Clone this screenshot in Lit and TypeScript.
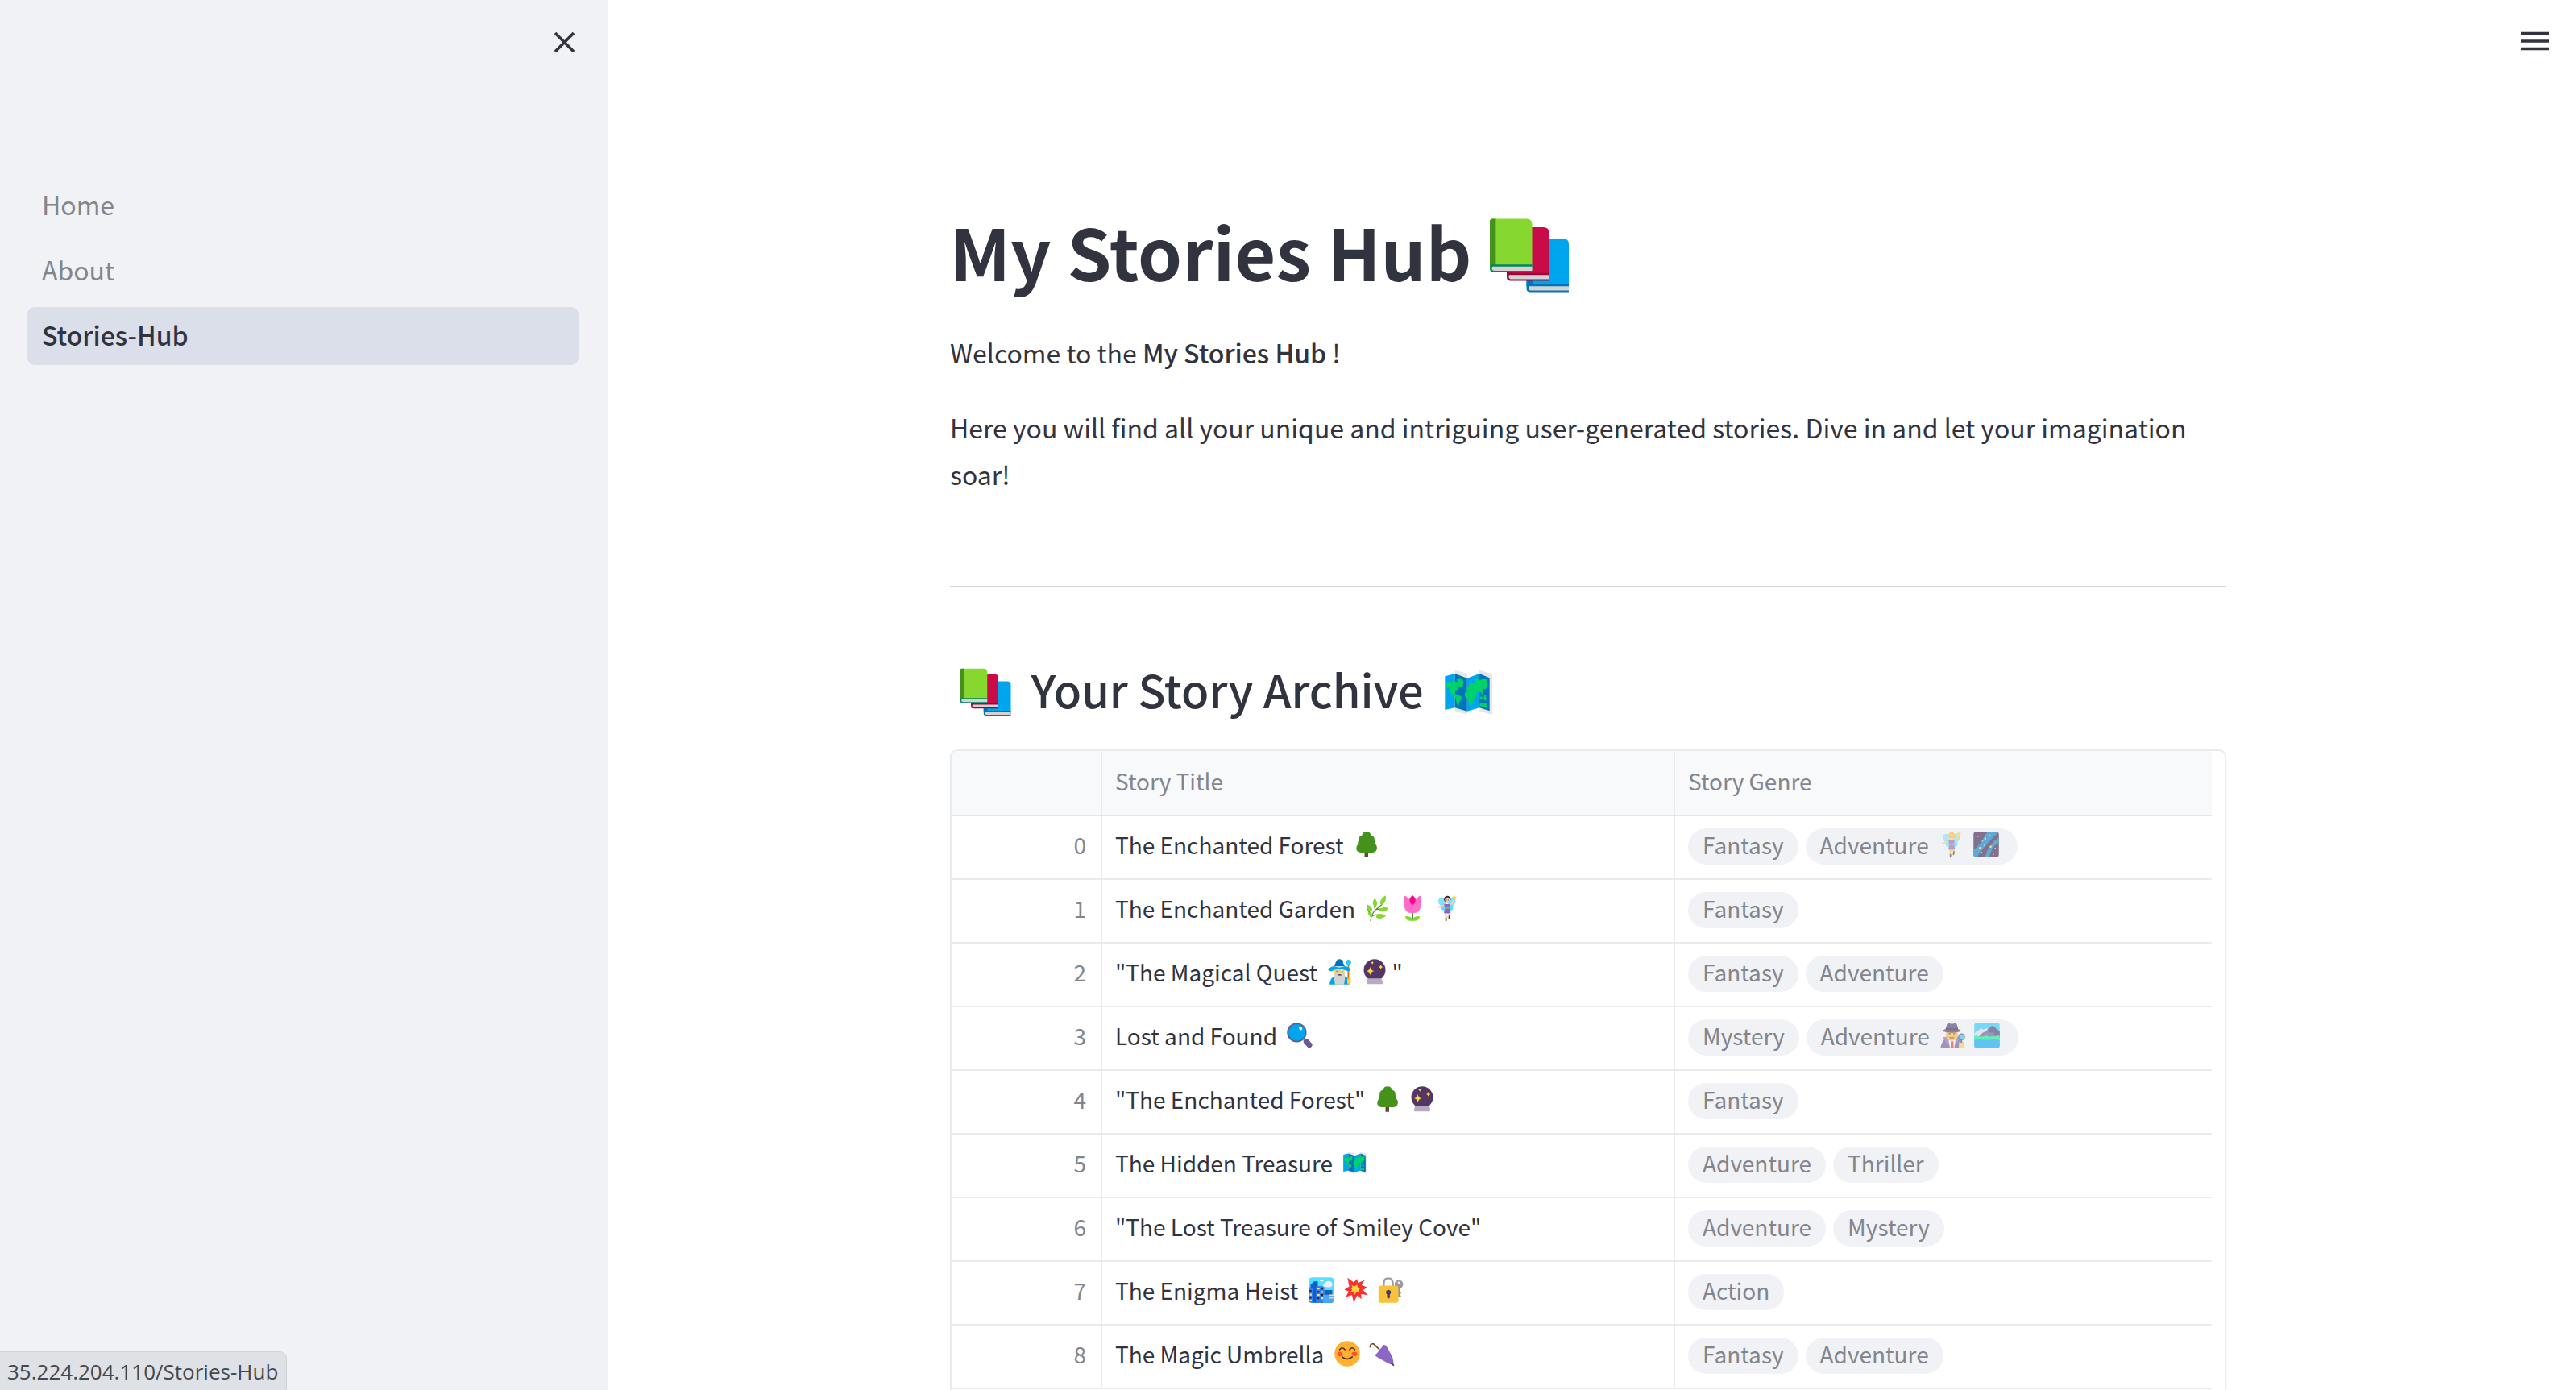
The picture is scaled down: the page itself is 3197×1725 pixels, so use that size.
import { LitElement, html, svg, css, nothing, type TemplateResult } from "lit";
import { customElement, property, state } from "lit/decorators.js";

type Icon =
  | "books" | "map" | "tree" | "herb" | "tulip" | "fairy" | "fairyGold" | "wizard" | "crystal"
  | "magnifier" | "city" | "burst" | "lock" | "smile" | "umbrella" | "galaxy" | "detective" | "lake";

interface Label {
  text: string;
  icons?: Icon[];
  tail?: string;
}

interface Story {
  title: Label;
  genres: Label[];
}

const STORIES: Story[] = [
  { title: { text: "The Enchanted Forest", icons: ["tree"] }, genres: [{ text: "Fantasy" }, { text: "Adventure", icons: ["fairyGold", "galaxy"] }] },
  { title: { text: "The Enchanted Garden", icons: ["herb", "tulip", "fairy"] }, genres: [{ text: "Fantasy" }] },
  { title: { text: '"The Magical Quest', icons: ["wizard", "crystal"], tail: '"' }, genres: [{ text: "Fantasy" }, { text: "Adventure" }] },
  { title: { text: "Lost and Found", icons: ["magnifier"] }, genres: [{ text: "Mystery" }, { text: "Adventure", icons: ["detective", "lake"] }] },
  { title: { text: '"The Enchanted Forest"', icons: ["tree", "crystal"] }, genres: [{ text: "Fantasy" }] },
  { title: { text: "The Hidden Treasure", icons: ["map"] }, genres: [{ text: "Adventure" }, { text: "Thriller" }] },
  { title: { text: '"The Lost Treasure of Smiley Cove"' }, genres: [{ text: "Adventure" }, { text: "Mystery" }] },
  { title: { text: "The Enigma Heist", icons: ["city", "burst", "lock"] }, genres: [{ text: "Action" }] },
  { title: { text: "The Magic Umbrella", icons: ["smile", "umbrella"] }, genres: [{ text: "Fantasy" }, { text: "Adventure" }] },
];

const book = (x: number, y: number, cover: string, spine: string, base: string) => svg`
  <g transform="translate(${x} ${y})">
    <path fill=${cover} d="M0 1Q0 0 1 0H13Q15 0 15 2V17H0Z"/>
    <path fill=${spine} d="M0 1Q0 0 1 0H2.1V17H0Z"/>
    <path fill=${base} d="M1.2 16.2H15V19H1.2Q0 19 0 17.6Q0 16.2 1.2 16.2Z"/>
    <path fill="#d3d3d3" d="M1.5 16.9H15V18.4H1.5Q.7 18.4.7 17.6T1.5 16.9Z"/>
  </g>`;

const fairy = (skin: string, hair: string) => svg`
  <ellipse cx="10.500" cy="9" rx="4.200" ry="5" fill="#83e1ff" transform="rotate(-25 10.500 9)"/>
  <ellipse cx="21" cy="9" rx="4" ry="5" fill="#83e1ff" transform="rotate(20 21 9)"/>
  <ellipse cx="12.500" cy="15" rx="2.800" ry="3.500" fill="#50e2ff"/>
  <ellipse cx="20" cy="15" rx="2.600" ry="3.500" fill="#50e2ff"/>
  <path d="M12.500 12.500Q10 15 6.500 14.700" fill="none" stroke=${skin} stroke-width="1.800" stroke-linecap="round"/>
  <path d="M19 12.300Q23 11.500 23.500 5.500" fill="none" stroke=${skin} stroke-width="1.700" stroke-linecap="round"/>
  <path d="M14.500 20L14.800 28M18 20L18.600 24L16.500 26.500" fill="none" stroke=${skin} stroke-width="2"/>
  <path d="M14.800 27.200V29.800M18.700 23.800L18.200 27" stroke="#533566" stroke-width="1.500" stroke-linecap="round"/>
  <circle cx="16.200" cy="6.200" r="3.700" fill=${hair}/>
  <ellipse cx="16.200" cy="7.200" rx="2.500" ry="3" fill=${skin}/>
  <path d="M15.200 7H15.300M17.200 7H17.300" stroke="#402a32" stroke-width=".8" stroke-linecap="round"/>
  <path d="M12.600 11.500H19.400L18.700 16L20 21Q16 22.500 12.400 21L13.700 16Z" fill="#8d65c5"/>
  <path d="M13.300 15H19V16.500H13.300Z" fill="#b4ac4c"/>
  <path d="M24 1.500L24.900 3.300L26.900 3.600L25.400 5L25.800 7L24 6L22.200 7L22.600 5L21.100 3.600L23.100 3.300Z" fill="#fcd53f"/>`;

const ART: Record<Icon, TemplateResult> = {
  books: svg`${book(15, 10, "#00a6ed", "#0074ba", "#0074ba")}${book(8, 6, "#ca0b4a", "#990838", "#990838")}${book(2, 3, "#86d72f", "#44911b", "#008463")}`,
  map: svg`
    <path fill="#e6e6e6" d="M8.300 3.900L15 5.700V28.400L8.300 26.400ZM21.800 3.900L28.900 5.900V28.400L21.800 26.400Z"/>
    <path fill="#00a6ed" d="M2.800 7.200L8.300 5.800V24.600L2.800 25.800ZM15 8.300L21.800 5.800V24.600L15 26.500Z"/>
    <path fill="#0074ba" d="M8.300 5.800L15 8.300V26.500L8.300 24.600ZM21.800 5.800L27.400 8.100V26.300L21.800 24.600Z"/>
    <path fill="#00d26a" d="M3.600 12Q4 10.300 5.500 10.300L8 9.800L10 10.500L9.300 9Q12.800 8 13 10.500T11 13L9.500 12.500L10 14.500L8 15.500L8.300 17L10 17.500Q12.300 18 12 19.500L10.500 22L10.300 24L9.300 22.500L8.800 19.500L7.500 18L6 16.500L5.300 14L4.700 13.500L4 14.300Z"/>
    <path fill="#00d26a" d="M14.500 13.500L16 12.500L16.500 11L19 10.500L20 8.500L22 9.500L23.500 8.800L26 9L26.300 12L25 14.500L23.800 14L23.500 17.500L22.500 16L20.500 15.500L20 18L18.500 20L18 22.500L16.300 23L15.600 19.500L13.800 18.500L13.700 16.500L16 15.200L15 14.700Z"/>
    <path fill="#00d26a" d="M22 18.500H23.600V20H22ZM24.300 17.500H25.500V20.500H24.300ZM22 22L25.800 21.800V24.200L22 23.700Z"/>`,
  tree: svg`
    <path fill="#6d4534" d="M13.800 23H17.800V30H13.800Z"/>
    <path fill="#44911b" d="M16 2Q20.200 2 21 5.800Q25.300 7 24.700 11.600Q26.300 13 25.800 15.500Q27.700 17.500 27.500 20Q27 24.700 22.500 24.800H9.500Q5 24.600 4.700 20.500Q4.600 17.500 6.500 15.700Q5.700 13.300 7.300 11.700Q6.700 7.200 11 5.800Q12 2 16 2Z"/>`,
  herb: svg`
    <path d="M8 30Q8.500 22 14.500 17Q17 15 20.500 12M8.200 25.500Q13 22.500 18 23.500M14 17.500Q18.500 17 24 16.500M8.500 23Q5 19 4 14.500M13 18Q12 14 12 9" fill="none" stroke="#44911b" stroke-width="1.100" stroke-linecap="round"/>
    <path fill="#86d72f" d="M24.500 2Q25.800 7 23 10.500Q20.500 13 19 11.800Q17.800 9 20 6Q21.800 3.500 24.500 2ZM12.500 5Q15.500 8 15.200 11.500Q14.500 14.500 13 14.800Q10.500 13.500 10.500 10Q10.800 6.500 12.500 5ZM4.300 12Q8.800 13.500 9.800 17Q10 19.500 8.700 20Q5.500 19.500 4.500 16.500ZM5 20.500Q8.800 20.500 10 23Q10 25.500 8 25.500Q5.500 24.500 5 20.500ZM27.800 16Q25.500 19.500 21.500 20Q18 20 17.500 18.500Q18.800 15.800 22 15.200Q25.500 14.800 27.800 16ZM25 24.500Q21.500 28 17.500 27.500Q14 26.800 14 25Q15.500 22.500 19 22.300Q22.500 22.500 25 24.500Z"/>`,
  tulip: svg`
    <path fill="#44911b" d="M15.300 20H16.900V30H15.300Z"/>
    <path fill="#86d72f" d="M16 29.800Q9 30.800 8 25Q14 24.300 16 28.500Q18 24.300 24.200 25Q23 30.800 16 29.800Z"/>
    <path fill="#ff6dc6" d="M7 3.500Q7.200 2 8.500 2.500L12 6L16 2.500L20 6L23.500 2.500Q24.900 2 25 3.500V13Q24.800 21.500 16 21.500Q7.200 21.500 7 13Z"/>
    <path fill="#ff0090" d="M16 1.800Q19.300 4.500 19.200 8Q18.500 11.500 16 12.800Q13.500 11.500 12.800 8Q12.900 4.500 16 1.800Z"/>`,
  fairy: fairy("#f3c9b5", "#402a32"),
  fairyGold: fairy("#ffc83d", "#ffb02e"),
  wizard: svg`
    <path d="M25.300 7V29" stroke="#d67d00" stroke-width="1.800" stroke-linecap="round"/>
    <circle cx="25.500" cy="5.500" r="2.800" fill="#26c9fc"/>
    <path fill="#00a6ed" d="M4.500 30Q5 22.500 10 21H22Q26 22.500 26.500 30Z"/>
    <path fill="#ffc83d" d="M24 23.500H28V28Q28 30 26 30T24 28ZM10 12H21V19H10Z"/>
    <path fill="#d3d3d3" d="M9.800 17Q12 16 15.500 16.300Q19 16 21.300 17Q22 24 20.500 30H10.500Q9 24 9.800 17Z"/>
    <path fill="#fff" d="M11.500 14H14.500V15.200H11.500ZM16.800 14H19.800V15.200H16.800Z"/>
    <path d="M12.500 15V15.200M18.500 15V15.200M14.300 19.500H17" stroke="#402a32" stroke-width="1.200" stroke-linecap="round"/>
    <path fill="#0074ba" d="M9.500 10L12 4Q13.500 1.500 16 2L20.800 4Q19 4.500 19.300 6L21.500 10Z"/>
    <path fill="#00a6ed" d="M3 13.800Q3.500 11 9.300 9.700Q15.500 12.300 21.700 9.700Q27 11 27.800 13.800Q26 16.500 22 14.500Q15.500 10.500 9 14.500Q5 16.500 3 13.800Z"/>`,
  crystal: svg`
    <circle cx="16" cy="14" r="12" fill="#533566"/>
    <path fill="#b4acbc" d="M8.500 23.300H23.500Q25.500 27 24.800 29.500H7.200Q6.500 27 8.500 23.300Z"/>
    <path fill="#fcd53f" d="M11.200 10.500Q11.700 14.500 15.500 15.200Q11.700 16 11.200 20Q10.700 16 7 15.200Q10.700 14.500 11.200 10.500ZM22.800 8Q23.200 10.300 25.200 10.600Q23.200 11 22.800 13.200Q22.400 11 20.500 10.600Q22.400 10.300 22.800 8ZM13.500 4.200Q13.800 5.700 15.200 6Q13.800 6.300 13.500 7.800Q13.200 6.300 11.800 6Q13.200 5.700 13.500 4.200Z"/>`,
  magnifier: svg`
    <path d="M20.500 20.500L22.500 22.500" stroke="#9b9b9b" stroke-width="2.500"/>
    <path d="M23.300 22.800L26.800 26.500" stroke="#635994" stroke-width="6" stroke-linecap="round"/>
    <circle cx="12.800" cy="12.800" r="10" fill="#00a6ed" stroke="#635994" stroke-width="1.600"/>
    <ellipse cx="17" cy="8.200" rx="1.600" ry="2.100" fill="#fff" transform="rotate(-35 17 8.200)"/>`,
  city: svg`
    <rect x="2" y="2" width="28" height="28" rx="4" fill="#50e2ff"/>
    <path fill="#0f5fc4" d="M4 10L8 6.500H12V12H18V30H6Q2 30 2 26V13H4ZM19 16H28V30H19Z"/>
    <path fill="#2e7ff0" d="M2 14H7V30H6Q2 30 2 26ZM10 12H19V30H10Z"/>
    <path fill="#4aa5ff" d="M18 21H30V26Q30 30 26 30H18Z"/>
    <path fill="#f3eef8" d="M18.500 12.500Q16.500 9.500 20 9Q20.500 5.800 24 6Q28 6.300 28 10Q27.500 13 24.500 12.800ZM14 5.800Q15.500 4.500 17.500 4.700Q19 5 18 6.500H14.500Z"/>
    <path fill="#ffe06b" d="M11.500 13.300H14V15.300H11.500ZM15.800 17H18V19H15.800ZM11.500 20.500H14V22.500H11.500ZM15.800 24H18V26H15.800ZM3 20H5.300V22H3ZM24 20.800H30V22.300H24ZM24 23.800H30V25.300H24ZM3 26.500H5.300V28H3Z"/>
    <path fill="#321b41" d="M15.800 13.300H17.800V15.300H15.800ZM11.500 17H13.500V19H11.500ZM15.800 20.500H17.800V22.500H15.800ZM11.500 24H13.500V26H11.500ZM3 16H5V18H3ZM3 23.300H5V25.300H3Z"/>`,
  burst: svg`
    <path fill="#f8312f" d="M6.500 2.500L13.500 7.500L17 3.500L18 8L25.500 5L22 10.500L28.500 13L23.500 16L29 21.500L21.500 20.500L22 26L17 22L13.500 30L11.500 21.500L4.500 23.500L8 17.500L3 15.500L8.500 12Z"/>
    <path fill="#fcd53f" d="M11 10.500L14.300 12L17 10L17.800 13L21 13.500L18.800 15.800L20 18.500L16.800 17.700L14.500 21L13.200 17.500L10 18L11.800 15.500L9.500 13.500L12 13Z"/>`,
  lock: svg`
    <path d="M24.500 11V24" stroke="#8a8a8a" stroke-width="2.400"/>
    <path fill="#8a8a8a" d="M24 18H27.300V20H24ZM24 22H27.300V24H24Z"/>
    <circle cx="25" cy="9.500" r="4.700" fill="#9b9b9b"/><circle cx="25" cy="7.800" r="1.200" fill="#f3f3f3"/>
    <path d="M8.300 13V8.500Q8.500 3 13.300 3T18.300 8.500V13" fill="none" stroke="#9b9b9b" stroke-width="2.200"/>
    <rect x="2.500" y="11" width="22" height="19" rx="3" fill="#f9c23c"/>
    <path fill="#433b6b" d="M13.500 15.800Q16.200 16 16.200 18.600Q16.100 20 15 20.900V24Q15 25.300 13.500 25.300T12 24V20.900Q10.900 20 10.800 18.600Q10.900 16 13.500 15.800Z"/>`,
  smile: svg`
    <circle cx="16" cy="16" r="14" fill="#ffb02e"/>
    <ellipse cx="8" cy="16.200" rx="3" ry="2.500" fill="#ff5032"/><ellipse cx="24" cy="16.200" rx="3" ry="2.500" fill="#ff5032"/>
    <path d="M7.500 11.500Q10.500 7.500 13.500 11.500M18.500 11.500Q21.500 7.500 24.500 11.500M10.300 19.500Q16 24 21.700 19.500" fill="none" stroke="#402a32" stroke-width="1.300" stroke-linecap="round"/>`,
  umbrella: svg`
    <path d="M3 8.500Q3.200 4.500 6.800 5.200L13 11" fill="none" stroke="#7d4533" stroke-width="1.500" stroke-linecap="round"/>
    <path fill="#8d65c5" d="M17.500 6.200Q20 5.800 21 7.500L27.500 19Q29 24 29 28L24 27L12 20.500L8 17.800Q11.500 15 13.500 11.500Q16.500 8.500 17.500 6.200Z"/>
    <path d="M26.500 27L29 28.800" stroke="#402a52" stroke-width="1.200" stroke-linecap="round"/>`,
  galaxy: svg`
    <rect x="2" y="2" width="28" height="28" rx="3" fill="#3d1a46"/>
    <path fill="#0079c0" d="M2 22Q10 16 14 7Q16 3.500 17.500 2H27Q28 2 29 3Q16 15 5.500 30Q2 30 2 26ZM30 8V14Q22 18 19.500 30H14.500Q18 16 30 8Z"/>
    <g fill="#5fd0ff"><circle cx="7" cy="7" r=".7"/><circle cx="12" cy="12" r=".8"/><circle cx="20" cy="6" r=".8"/><circle cx="11" cy="25" r=".9"/><circle cx="26" cy="20" r=".7"/><circle cx="14" cy="17" r=".8"/><circle cx="24" cy="27" r=".7"/></g>
    <circle cx="9.500" cy="20" r="1.300" fill="#fcd53f"/><circle cx="15" cy="9.500" r="1.100" fill="#fcd53f"/><circle cx="21" cy="18.500" r="1.100" fill="#fcd53f"/>`,
  detective: svg`
    <path fill="#635994" d="M3 30Q4 22 10 18L16 21L22 18Q26 21 27 30Z"/>
    <path fill="#8d65c5" d="M5.500 18L11 17L15 29H13ZM22 17L24.500 19L17.500 29H16.500Z"/>
    <path fill="#fff" d="M11.500 18.500L15.300 22L20 18.500L18 30H13.500Z"/>
    <path fill="#f8312f" d="M14.300 22.500H17.200L17.500 30H14Z"/>
    <path fill="#ffb02e" d="M9 11H22V17Q21 21.500 15.500 22Q10 21.500 9 17Z"/>
    <path d="M12.500 14H13.500M17.500 14H18.500M13.500 18.500H17.500" stroke="#6d4534" stroke-width="1.200" stroke-linecap="round"/>
    <path fill="#433b6b" d="M8.500 9L10 4Q11.500 1.500 14 3H17Q19.500 1.500 21 4L22.500 9Q26 10 25.500 11.200Q22 13 15.500 13T5 11.200Q5 10 8.500 9Z"/>
    <path fill="#321b41" d="M9 7.500Q15.500 9 22 7.500L22.500 10H8.500Z"/>
    <path fill="#ffc83d" d="M23.500 23H29V30H23Z"/>
    <path d="M26 20V24" stroke="#433b6b" stroke-width="1.800"/>
    <circle cx="26.200" cy="17.500" r="3.200" fill="#26c9fc" stroke="#3a4a6b" stroke-width="1.200"/>`,
  lake: svg`
    <rect x="2" y="2" width="28" height="28" rx="3" fill="#26c9fc"/>
    <path fill="#dedede" d="M2 15Q4 10.500 6.500 10.500L9 8L12 9.500L15 8L18 10L15 17H2Z"/>
    <path fill="#635994" d="M5 19L11 13L14 12L20 6.500Q22 4.800 24 6.500L30 12V19Z"/>
    <path fill="#433b6b" d="M17 9.500L20.500 6.500Q22 4.800 24 6.500L30 12V15L26 16L22 12.500L19 13Z"/>
    <path fill="#00f38d" d="M2 17L4 15L6 17H14L15.500 15.500L17 17H26L27.500 15L29 17H30V21H2Z"/>
    <path fill="#00a6ed" d="M2 21Q8 20 16 21Q24 20 30 21V27Q30 30 27 30H5Q2 30 2 27Z"/>`,
};

@customElement("emoji-art")
class EmojiArt extends LitElement {
  @property() name: Icon = "books";

  static styles = css`
    :host { display: inline-block; line-height: 0; }
    .art { display: block; width: 100%; height: 100%; }
  `;

  render() {
    return html`<svg class="art" viewBox="0 0 32 32" aria-hidden="true">${ART[this.name]}</svg>`;
  }
}

@customElement("app-root")
class AppRoot extends LitElement {
  @state() private sidebarOpen = true;

  static styles = css`
    :host {
      display: block;
      font-family: "Noto Sans CJK SC", "Source Sans Pro", sans-serif;
      font-size: 32px;
      color: #31333f;
      background: #fff;
    }
    .layout { display: flex; height: 100vh; overflow: hidden; }
    .icon-button {
      display: flex;
      padding: 0;
      border: 0;
      background: none;
      color: inherit;
      cursor: pointer;
    }
    .sidebar { flex: none; width: 754px; background: #f0f2f6; }
    .sidebar-head {
      display: flex;
      align-items: center;
      justify-content: flex-end;
      height: 105px;
      padding-right: 40px;
    }
    .close { width: 27px; height: 27px; }
    .nav {
      display: flex;
      flex-direction: column;
      gap: 9px;
      padding: 114px 36px 0 34px;
    }
    .nav-link {
      padding: 0 18px 4px;
      border-radius: 9px;
      line-height: 68px;
      color: #83858d;
      text-decoration: none;
    }
    .nav-link.active { background: #dadfe9; color: #31333f; font-weight: 500; }

    .main { flex: 1; min-width: 0; display: flex; flex-direction: column; }
    .topbar {
      flex: none;
      display: flex;
      align-items: center;
      justify-content: flex-end;
      height: 101px;
      padding-right: 33px;
    }
    .menu { width: 36px; height: 24px; }
    .scroll { flex: 1; min-height: 0; display: flex; padding-right: 9px; overflow: hidden; }
    .content {
      display: flex;
      flex-direction: column;
      flex: 0 1 1584px;
      min-width: 0;
      margin: 0 auto;
      padding-top: 157px;
    }
    .title { margin: 0 0 44px; font-size: 88px; line-height: 106px; font-weight: 700; }
    .text { margin: 0 0 35px; line-height: 58px; }
    .text b { font-weight: 500; }
    .rule { width: 100%; height: 2px; margin: 75px 0 92px; border: 0; background: #d6d6d8; }
    .subtitle { margin: 0 0 42px; font-size: 56px; line-height: 67px; font-weight: 500; }

    .em { width: 36px; height: 36px; margin: 0 3px 0 4px; vertical-align: -6px; }
    .title .em { width: 112px; height: 112px; margin: -12px 16px; vertical-align: -12px; }
    .subtitle .em { width: 72px; height: 72px; margin: -8px 8px; vertical-align: -8px; }

    .frame {
      flex: 1 0 auto;
      padding-right: 16px;
      border: 2px solid #eaebec;
      border-bottom: 0;
      border-radius: 9px 9px 0 0;
      overflow: hidden;
    }
    .grid {
      width: 100%;
      table-layout: fixed;
      border-collapse: separate;
      border-spacing: 0;
      font-size: 28px;
    }
    .col-index { width: 187px; }
    .col-title { width: 711px; }
    .grid th, .grid td {
      padding: 0 18px 7px 16px;
      border-right: 2px solid #eaebec;
      border-bottom: 2px solid #eaebec;
      line-height: 70px;
      text-align: left;
      font-weight: 400;
      white-space: nowrap;
    }
    .grid th:last-child, .grid td:last-child { border-right: 0; }
    .grid thead th {
      padding-bottom: 5px;
      border-bottom-color: #e3e5e9;
      background: #f8f9fb;
      line-height: 74px;
      color: #83858d;
    }
    .grid tbody th { text-align: right; color: #83858d; }
    .grid td.genres { padding: 0 16px; line-height: 40px; }
    .pills { display: flex; gap: 9px; padding: 15px 0 17px; }
    .pill {
      padding: 0 18px 5px;
      border-radius: 23px;
      background: #f0f2f6;
      color: #83858d;
    }
    .pill .em { opacity: 0.6; }

    .status {
      position: absolute;
      left: 0;
      bottom: 0;
      padding: 2px 10px 0 9px;
      border: 1px solid #cfd2d7;
      border-width: 1px 1px 0 0;
      border-radius: 0 9px 0 0;
      background: #dee1e6;
      color: #45494d;
      font: 26px/45px "Open Sans", sans-serif;
    }
  `;

  private label({ text, icons, tail }: Label) {
    return html`${text}${icons
      ? html` ${icons.map((name) => html`<emoji-art class="em" .name=${name}></emoji-art>`)}`
      : nothing}${tail ?? nothing}`;
  }

  private renderSidebar() {
    return html`
      <aside class="sidebar">
        <div class="sidebar-head">
          <button class="icon-button" aria-label="Close sidebar" @click=${() => (this.sidebarOpen = false)}>
            <svg class="close" viewBox="0 0 27 27" aria-hidden="true">
              <path d="M2 2L25 25M25 2L2 25" stroke="currentColor" stroke-width="3.600" />
            </svg>
          </button>
        </div>
        <nav class="nav">
          <a class="nav-link" href="/">Home</a>
          <a class="nav-link" href="/About">About</a>
          <a class="nav-link active" href="/Stories-Hub" aria-current="page">Stories-Hub</a>
        </nav>
      </aside>`;
  }

  render() {
    return html`
      <div class="layout">
        ${this.sidebarOpen ? this.renderSidebar() : nothing}
        <main class="main">
          <header class="topbar">
            <button class="icon-button" aria-label="Menu">
              <svg class="menu" viewBox="0 0 36 24" aria-hidden="true">
                <path d="M1 2.500H35M1 12H35M1 21.500H35" stroke="currentColor" stroke-width="3.600" />
              </svg>
            </button>
          </header>
          <div class="scroll">
            <div class="content">
              <h1 class="title">My Stories Hub<emoji-art class="em" .name=${"books"}></emoji-art></h1>
              <p class="text">Welcome to the <b>My Stories Hub</b> !</p>
              <p class="text">
                Here you will find all your unique and intriguing user-generated stories. Dive in and let your imagination soar!
              </p>
              <hr class="rule" />
              <h3 class="subtitle"><emoji-art class="em" .name=${"books"}></emoji-art> Your Story Archive <emoji-art class="em" .name=${"map"}></emoji-art></h3>
              <div class="frame">
                <table class="grid">
                  <colgroup>
                    <col class="col-index" />
                    <col class="col-title" />
                    <col />
                  </colgroup>
                  <thead>
                    <tr><th></th><th scope="col">Story Title</th><th scope="col">Story Genre</th></tr>
                  </thead>
                  <tbody>
                    ${STORIES.map((story, i) => html`
                      <tr>
                        <th scope="row">${i}</th>
                        <td>${this.label(story.title)}</td>
                        <td class="genres">
                          <div class="pills">
                            ${story.genres.map((g) => html`<span class="pill">${this.label(g)}</span>`)}
                          </div>
                        </td>
                      </tr>`)}
                  </tbody>
                </table>
              </div>
            </div>
          </div>
        </main>
      </div>
      <div class="status">35.224.204.110/Stories-Hub</div>
    `;
  }
}
